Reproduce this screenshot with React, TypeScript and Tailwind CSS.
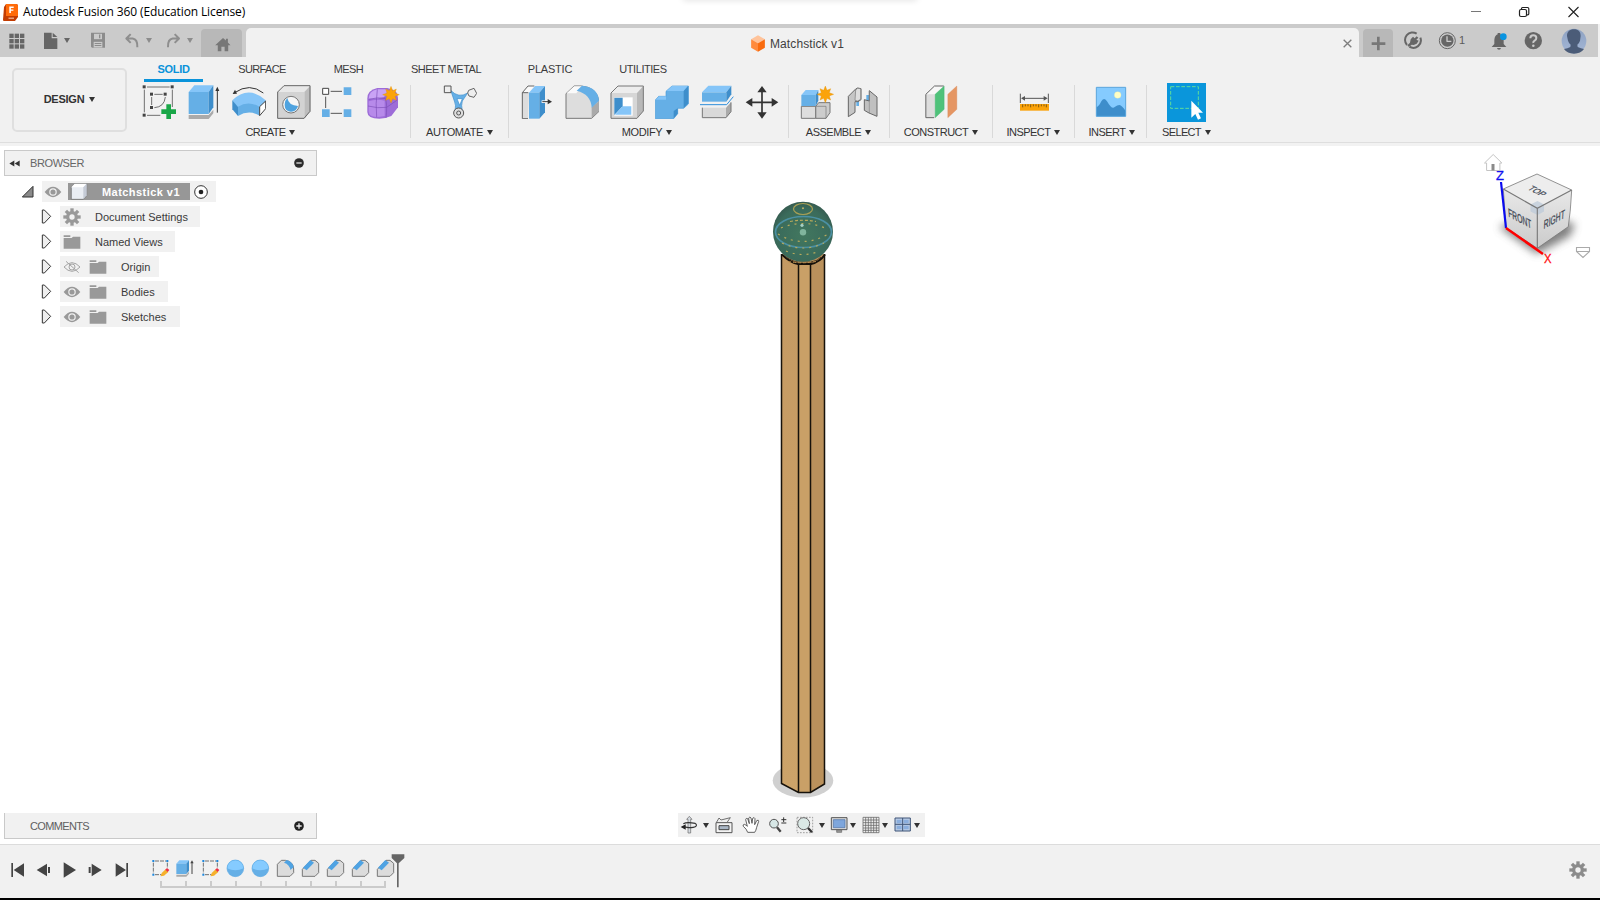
import type { ReactNode } from "react";

/* Icon artwork is laid out on sheets with three units per pixel. */
function Ic({ x, y, w = 102, h = 102, className = "w-[34px] h-[34px]", children }: { x: number; y: number; w?: number; h?: number; className?: string; children: ReactNode }) {
  return (
    <svg viewBox={`${x} ${y} ${w} ${h}`} className={`block shrink-0 ${className}`} fill="none" strokeLinejoin="round">
      {children}
    </svg>
  );
}

function Caret({ className = "text-[#333]" }: { className?: string }) {
  return (
    <svg viewBox="0 0 6 5" className={`block h-[5px] w-[6px] shrink-0 ${className}`}>
      <path d="M0 0h6L3 5z" fill="currentColor" />
    </svg>
  );
}

function Group({ label, width, track, last, iconPad = "", labelPad = "", children }: { label: string; width: string; track: string; last?: boolean; iconPad?: string; labelPad?: string; children: ReactNode }) {
  return (
    <div className={`flex h-[60px] shrink-0 ${width}`}>
      <div className="flex flex-1 flex-col items-center pt-[3px]">
        <div className={`flex h-[34px] items-center justify-center gap-[11px] ${iconPad}`}>{children}</div>
        <div className={`mt-[5px] flex h-4 items-center gap-[4px] text-[#333] ${labelPad}`}>
          <span className={`whitespace-nowrap text-[11px] leading-4 ${track}`}>{label}</span>
          <Caret />
        </div>
      </div>
      {!last && <div className="mt-[3px] h-[53px] w-px bg-[#d9d9d9]" />}
    </div>
  );
}

const Star = ({ x, y }: { x: number; y: number }) => (
  <path transform={`translate(${x} ${y})`} d="M0-25L5-12 16-17 12-5 25 0 12 5 16 17 5 12 0 25-5 12-16 17-12 5-25 0-12-5-16-17-5-12z" fill="#fba30a" stroke="#e18f00" strokeWidth="1" />
);

function TitleBar() {
  return (
    <div className="flex h-6 items-center bg-white">
      <div className="flex w-[685px] shrink-0 items-center">
        <svg viewBox="0 0 15 17" className="ml-[3px] h-[17px] w-[15px] shrink-0">
          <path d="M1 3L3 0h10q2 0 2 2v11l-3 4H1q-1 0-1-1z" fill="#c23c02" />
          <path d="M3 0h10q2 0 2 2v10H3z" fill="#ff6b0a" />
          <path d="M6.3 9V2.6h4.4v1.4H7.9v1.4h2.5v1.3H7.9V9z" fill="#fff" />
          <path d="M5.500 14.300h5.500" stroke="#e8a17c" strokeWidth="1.500" />
        </svg>
        <span className="ml-[5px] whitespace-nowrap font-['Open_Sans','Noto_Sans',sans-serif] text-[12px] leading-6 tracking-[-0.12px] text-black">Autodesk Fusion 360 (Education License)</span>
      </div>
      <div className="h-0 w-[230px] self-start shadow-[0_-2px_6px_2px_#d8d8d8]" />
      <svg viewBox="1465 0 120 24" className="ml-auto mr-[15px] h-6 w-[120px]" fill="none" stroke="#222" strokeWidth="1">
        <path d="M1471 11.500h10" stroke="#777" />
        <rect x="1519.500" y="9.500" width="7" height="7" rx="1.500" strokeWidth="1.200" />
        <path d="M1521.500 9V8.500q0-1 1-1h5q1.300 0 1.300 1.300v5q0 1-1 1h-.8" strokeWidth="1.200" />
        <path d="M1568.500 7l10 10m0-10l-10 10" strokeWidth="1.100" />
      </svg>
    </div>
  );
}

function TabBar() {
  return (
    <div className="flex h-[33px] shrink-0 border-r-2 border-[#f1f1f1] bg-[#cbcbcb]">
      <div className="flex h-[33px] w-[201px] shrink-0 items-center pl-[9px]">
        <Ic x={27} y={98} w={48} h={48} className="h-4 w-4">
          {[100, 116, 132].map((y) => [28, 44, 60].map((x) => <rect key={`${x}-${y}`} x={x} y={y} width="13" height="13" fill="#666" />))}
        </Ic>
        <Ic x={129} y={96} w={48} h={54} className="ml-[18px] h-[18px] w-4">
          <path d="M132 98h23v17h17v32h-40z" fill="#666" />
          <path d="M158 98l14 13h-14z" fill="#666" />
        </Ic>
        <Caret className="ml-[5px] text-[#666]" />
        <Ic x={270} y={98} w={48} h={50} className="ml-5 h-[17px] w-4">
          <path d="M273 100h42v45h-39l-3-3z" fill="#8c8c8c" />
          <path d="M282 103h24v16h-24z" fill="#cbcbcb" />
          <path d="M299 105v11" stroke="#8c8c8c" strokeWidth="4" />
          <path d="M281 127h26v17h-26z" fill="#cbcbcb" />
          <path d="M284 132h20M284 138h20" stroke="#8c8c8c" strokeWidth="3" />
        </Ic>
        <Ic x={372} y={98} w={48} h={50} className="ml-[18px] h-[17px] w-4">
          <path d="M392 104l-13 13 13 13M379 117h19q15 2 14 26" stroke="#8e8e8e" strokeWidth="6" />
        </Ic>
        <Caret className="ml-[6px] text-[#8c8c8c]" />
        <Ic x={495} y={98} w={48} h={50} className="ml-[13px] h-[17px] w-4">
          <path d="M524 104l13 13-13 13M537 117h-19q-15 2-14 26" stroke="#8e8e8e" strokeWidth="6" />
        </Ic>
        <Caret className="ml-[6px] text-[#8c8c8c]" />
      </div>
      <div className="mt-[5px] flex w-[41px] shrink-0 items-center justify-center rounded-t-[4px] bg-[#b8b8b8] pl-[3px] pt-[3px]">
        <Ic x={642} y={110} w={54} h={46} className="h-[15px] w-[18px]">
          <path d="M645 135l24-22 9 8v-6h6v12l8 8h-7v19h-11v-14h-10v14h-11v-19z" fill="#777" />
        </Ic>
      </div>
      <div className="ml-[4px] mt-[4px] flex w-[1113px] shrink-0 items-center rounded-t-[5px] bg-[#f1f1f1]">
        <div className="ml-[504px] flex items-center gap-[4px] pt-[2px]">
          <Ic x={242} y={106} w={48} h={52} className="h-[17px] w-4">
            <path d="M266 107l21 12-21 12-21-12z" fill="#ffc39a" />
            <path d="M245 119l21 12v26l-21-12z" fill="#ff8a3c" />
            <path d="M287 119l-21 12v26l21-12z" fill="#f96b0e" />
          </Ic>
          <span className="text-[12px] tracking-[0.1px] text-[#3f3f3f]">Matchstick v1</span>
        </div>
        <Ic x={368} y={112} w={33} h={33} className="ml-auto mr-[6px] mt-px h-[11px] w-[11px]">
          <path d="M373 117l23 23m0-23l-23 23" stroke="#7d7d7d" strokeWidth="4" />
        </Ic>
      </div>
      <div className="ml-[4px] mt-[5px] flex w-[30px] shrink-0 items-center justify-center rounded-t-[4px] bg-[#b8b8b8]">
        <Ic x={453} y={105} w={45} h={45} className="h-[15px] w-[15px]">
          <path d="M475 107v41M455 128h41" stroke="#777" strokeWidth="8" />
        </Ic>
      </div>
      <div className="flex h-[33px] items-center">
        <Ic x={552} y={94} w={57} h={57} className="ml-[11px] h-[19px] w-[19px]">
          <path d="M561 136A22.500 22.500 0 01590 102M601 114A22.500 22.500 0 01568 141" stroke="#666" strokeWidth="6" />
          <path d="M562 146l9-11" stroke="#cbcbcb" strokeWidth="4" />
          <path d="M572 119l7-8 5 5 6-6 5 4-6 6 7 3-6 9-9 4-6-1-8 7-5-5 8-8z" fill="#666" />
        </Ic>
        <Ic x={656} y={94} w={57} h={57} className="ml-[15px] h-[19px] w-[19px]">
          <circle cx="684" cy="123" r="24" stroke="#666" strokeWidth="3" />
          <circle cx="684" cy="123" r="18.500" fill="#666" />
          <path d="M683 110v15h13" stroke="#cbcbcb" strokeWidth="4" />
        </Ic>
        <span className="ml-[2px] w-[6px] text-[11px] text-[#5c5c5c]">1</span>
        <Ic x={810} y={92} w={54} h={60} className="ml-[25px] h-5 w-[18px]">
          <path d="M815 140l8-9v-12q1-14 10-17v-4h8v4q9 3 10 17v12l8 9z" fill="#666" />
          <path d="M831 143h12q-1 5-6 5t-6-5z" fill="#666" />
          <circle cx="850" cy="109" r="10" fill="#0a94e0" />
        </Ic>
        <Ic x={912} y={94} w={57} h={57} className="ml-[16px] h-[19px] w-[19px]">
          <circle cx="940" cy="123" r="26" fill="#666" />
          <path d="M931 116q0-9 9-9t9 8q0 5-5 8t-4 7" stroke="#cbcbcb" strokeWidth="6" />
          <circle cx="940" cy="138" r="3.800" fill="#cbcbcb" />
        </Ic>
        <Ic x={1023} y={84} w={78} h={78} className="ml-[18px] h-[26px] w-[26px]">
          <defs>
            <linearGradient id="av" x1="0" y1="0" x2="0" y2="1">
              <stop offset="0" stopColor="#8ea2c2" />
              <stop offset="1" stopColor="#a3b6d6" />
            </linearGradient>
          </defs>
          <circle cx="1062" cy="123" r="37" fill="url(#av)" />
          <path d="M1062 88c13 0 20 7 20 20l-2 14q-3 9-8 12l1 7q10 4 19 6-10 14-30 14t-30-14q11-2 19-6l1-7q-5-3-8-12l-3-14c0-13 8-20 21-20z" fill="#4b5c78" />
        </Ic>
      </div>
    </div>
  );
}

function Tab({ label, cls }: { label: string; cls: string }) {
  return <div className={`flex h-[25px] shrink-0 items-center justify-center whitespace-nowrap text-[11px] text-[#3c3c3c] ${cls}`}>{label}</div>;
}

function Ribbon() {
  return (
    <div className="flex h-[89px] shrink-0 bg-[#f2f2f2]">
      <div className="flex h-[86px] w-full border-b border-[#dedede] bg-[#f1f1f1]">
        <div className="ml-[12px] mt-[11px] flex h-[64px] w-[115px] shrink-0 items-center justify-center gap-[5px] rounded-[5px] border-2 border-[#dfdfdf] pb-px">
          <span className="text-[11px] font-bold tracking-[-0.25px] text-[#333]">DESIGN</span>
          <Caret />
        </div>
        <div className="ml-1 flex flex-col">
          <div className="flex pl-[13px]">
            <div className="flex h-[25px] w-[59px] flex-col items-center border-b-[3px] border-[#0a93da] text-[11px] font-bold leading-[25px] tracking-[-0.3px] text-[#0a93da]">SOLID</div>
            <Tab label="SURFACE" cls="w-[118px] tracking-[-0.65px]" />
            <Tab label="MESH" cls="w-[55px] tracking-[-0.6px]" />
            <Tab label="SHEET METAL" cls="w-[140px] tracking-[-0.48px]" />
            <Tab label="PLASTIC" cls="w-[68px] tracking-[-0.2px]" />
            <Tab label="UTILITIES" cls="w-[118px] tracking-[-0.45px]" />
          </div>
          <div className="flex">
            <Group label="CREATE" width="w-[280px]" track="tracking-[-0.65px]" iconPad="pl-[2px]">
              <Ic x={426} y={255}>
                <path d="M441 261h68M433 269v68M517 269v52M441 346h40M463 283h25M455 291v24M496 291q-3 30-33 32" stroke="#555" strokeWidth="2.500" />
                {[[433, 261], [517, 261], [433, 346], [455, 283], [496, 283], [455, 323]].map(([x, y]) => <rect key={`${x}${y}`} x={x - 5} y={y - 5} width="9" height="9" fill="#444" />)}
                <path d="M499 313h14v15h15v14h-15v15h-14v-15h-15v-14h15z" fill="#1aa748" />
              </Ic>
              <Ic x={561} y={255}>
                <path d="M566 345h60l14-16v11l-14 17h-60z" fill="#aaa" />
                <path d="M566 276l17-20h57l-14 20z" fill="#85c5f8" />
                <path d="M566 276h60v66h-60z" fill="#65afe6" />
                <path d="M626 276l14-20v66l-14 20z" fill="#3e8ecb" />
                <path d="M652 266v72" stroke="#333" strokeWidth="3" />
                <path d="M652 260l6 13h-12z" fill="#333" />
              </Ic>
              <Ic x={696} y={255}>
                <path d="M704 278q45-31 86 1" stroke="#333" strokeWidth="3" />
                <path d="M698 282l7-13 6 12z" fill="#333" />
                <path d="M697 301q48-47 100 0v10l-18 13q-32-18-66 0z" fill="#85c5f8" />
                <path d="M697 301l17 20v27l-17-20z" fill="#3e8ecb" />
                <path d="M714 320q32-20 65 1v26q-32-19-65 1z" fill="#65afe6" />
                <path d="M779 320l18-17v23l-18 21z" fill="#fff" stroke="#444" strokeWidth="3" />
              </Ic>
              <Ic x={831} y={255}>
                <path d="M832 276l20-19h79v77l-18 22h-81z" fill="#e8e8e8" />
                <path d="M913 276l18-19v77l-18 22z" fill="#bdbdbd" />
                <path d="M832 276h81v80h-81z" fill="#d3d3d3" />
                <path d="M833 276l19-19h78v77l-18 21h-79z" stroke="#666" strokeWidth="3" />
                <circle cx="873" cy="314" r="25" fill="#f6f6f6" stroke="#777" strokeWidth="3" />
                <path d="M862 294q4 23 32 24-5 18-22 17-18-2-18-21 1-14 8-20z" fill="#4fa3df" />
              </Ic>
              <Ic x={966} y={255}>
                <path d="M992 274h34M977 290v34M992 340h34" stroke="#555" strokeWidth="3" />
                <rect x="968" y="265" width="18" height="18" fill="#fff" stroke="#444" strokeWidth="3" />
                <path d="M1031 262h23v23h-23zM966 328h23v23h-23zM1031 328h23v23h-23z" fill="#65afe6" />
              </Ic>
              <Ic x={1101} y={255}>
                <path d="M1102 295q0-24 30-31h30q32 6 32 30v28l-20 26q-18 8-36 8-36 0-36-20z" fill="#9d6cd8" />
                <path d="M1106 296q0-22 26-28h28q4 12-6 22-22 8-48 6z" fill="#c9a3f5" />
                <path d="M1106 304q22-8 48-2v46q-48 10-48-14z" fill="#b78aea" />
                <path d="M1104 318q30 8 56 4l32-22M1130 352q-4-40 2-84M1158 354q4-34 0-52l-4-12M1106 298q28-8 50-2" stroke="#7d4fb8" strokeWidth="2" />
                <Star x={1173} y={284} />
              </Ic>
            </Group>
            <Group label="AUTOMATE" width="w-[98px]" track="tracking-[-0.4px]">
              <Ic x={129} y={90}>
                <path d="M152 106q24 25 51 8l-16 24q-4 12 0 31h-22q4-20-2-31z" fill="#65afe6" stroke="#3e8ecb" strokeWidth="2" />
                <path d="M171 131h16l-8 20z" fill="#fff" stroke="#3e8ecb" strokeWidth="2" />
                <rect x="133" y="93" width="20" height="20" fill="#eee" stroke="#555" strokeWidth="3" />
                <path d="M206 106l16-6 8 15-8 12-15-4-4-9z" fill="#eee" stroke="#666" strokeWidth="3" />
                <circle cx="176" cy="174" r="15" fill="#ddd" stroke="#555" strokeWidth="3" />
                <circle cx="176" cy="174" r="6" stroke="#555" strokeWidth="3" />
              </Ic>
            </Group>
            <Group label="MODIFY" width="w-[280px]" track="tracking-[-0.35px]" iconPad="pl-[2px]" labelPad="pr-[3px]">
              <Ic x={360} y={90}>
                <path d="M384 191h-17v-78l17-20h21l-18 20z" fill="#ddd" />
                <path d="M367 113l17-20h21l-18 20z" fill="#fafafa" />
                <path d="M384 191h-17v-78l17-20h19M367 113h18" stroke="#666" strokeWidth="3" />
                <path d="M387 113l18-20h30l-17 20z" fill="#85c5f8" />
                <path d="M387 113h31v78h-31z" fill="#65afe6" />
                <path d="M418 113l17-20v79l-17 19z" fill="#3e8ecb" />
                <path d="M425 140h22" stroke="#fff" strokeWidth="8" />
                <path d="M427 140h18" stroke="#333" strokeWidth="3" />
                <path d="M443 132l13 8-13 8z" fill="#333" />
              </Ic>
              <Ic x={495} y={90}>
                <path d="M498 116l24-23h22q48 4 53 47v29l-22 21h-77z" fill="#ddd" stroke="#777" strokeWidth="3" />
                <path d="M500 115l22-21h24l-17 21z" fill="#fafafa" />
                <path d="M575 157l21-18v30l-21 20z" fill="#aaa" />
                <path d="M530 107l16-15q48 4 51 45l-22 21q-2-40-45-51z" fill="#65afe6" />
              </Ic>
              <Ic x={630} y={90}>
                <path d="M632 114l22-21h76v75l-19 22h-79z" fill="#ededed" />
                <path d="M711 114l19-21v75l-19 22z" fill="#b8b8b8" />
                <path d="M632 114h79v76h-79z" fill="#d6d6d6" />
                <path d="M633 114l21-21h76v75l-19 22h-78z" stroke="#777" strokeWidth="3" />
                <path d="M643 127h55v55h-55z" fill="#fff" />
                <path d="M643 128h25v26l-25 26z" fill="#3e8ecb" />
                <path d="M668 154h26v25h-49z" fill="#85c5f8" />
              </Ic>
              <Ic x={765} y={90}>
                <path d="M766 135l10-11h22v-15l18-16h49v54l-14 13h-18v16l-12 15h-55z" fill="#65afe6" stroke="#4a9bd8" strokeWidth="2" />
                <path d="M800 108l16-15h47l-12 15z" fill="#85c5f8" />
                <path d="M767 134l10-10h21v10z" fill="#85c5f8" />
                <path d="M851 108l14-15v52l-14 14zM821 168l12-8v16l-12 14z" fill="#3e8ecb" />
              </Ic>
              <Ic x={900} y={90}>
                <path d="M906 112l19-20h69l-15 20z" fill="#85c5f8" />
                <path d="M906 112h73v28h-73z" fill="#65afe6" />
                <path d="M979 112l15-20v26l-15 22z" fill="#3e8ecb" />
                <path d="M900 149h80l20-24" stroke="#2f8fdb" strokeWidth="3" />
                <path d="M907 158h71v30h-71z" fill="#d9d9d9" />
                <path d="M978 158l15-16v28l-15 18z" fill="#aaa" />
                <path d="M907 158v30h71l15-18v-28" stroke="#777" strokeWidth="3" />
              </Ic>
              <Ic x={1033} y={90}>
                <path d="M1084 104v76M1047 142h75" stroke="#333" strokeWidth="5" />
                <path d="M1084 93l14 19h-28zM1084 191l14-19h-28zM1035 142l20-13v26zM1133 142l-20-13v26z" fill="#333" />
              </Ic>
            </Group>
            <Group label="ASSEMBLE" width="w-[101px]" track="tracking-[-0.5px]" labelPad="pr-px">
              <Ic x={30} y={90}>
                <path d="M77 154l9-11h34v30l-12 17H77z" fill="#ccc" stroke="#777" strokeWidth="3" />
                <path d="M34 154h43v36H34z" fill="#ddd" stroke="#777" strokeWidth="3" />
                <path d="M77 154h31v36" stroke="#777" strokeWidth="2" />
                <path d="M34 120l13-15h38l-8 15z" fill="#85c5f8" />
                <path d="M34 120h43v33H34z" fill="#65afe6" />
                <path d="M77 120l8-15v32l-8 16z" fill="#3e8ecb" />
                <Star x={106} y={118} />
              </Ic>
              <Ic x={165} y={90}>
                <path d="M199 118h8v35h-8zM229 120h8v24h-8z" fill="#65afe6" />
                <path d="M175 124l22-22 6-3 10 2v33l-9 6h-9v32l-20 13z" fill="#c6c6c6" stroke="#666" strokeWidth="3" />
                <path d="M197 105l6-5 9 1v32l-9 5-8-2z" fill="#dedede" stroke="#777" strokeWidth="2" />
                <path d="M238 107l23 19v58l-24-10-14-8v-32l15 4z" fill="#c0c0c0" stroke="#666" strokeWidth="3" />
                <path d="M238 108v66" stroke="#888" strokeWidth="2" />
              </Ic>
            </Group>
            <Group label="CONSTRUCT" width="w-[103px]" track="tracking-[-0.5px]">
              <Ic x={403.5} y={90}>
                <path d="M409 118l26-25h29l-27 25v70h-28z" fill="#ddd" />
                <path d="M409 118l26-25h29l-27 25z" fill="#f7f7f7" />
                <path d="M434 188h-25v-70l26-25h28" stroke="#666" strokeWidth="3" />
                <path d="M437 118l27-25v70l-27 25z" fill="#4fc27a" stroke="#3daf69" strokeWidth="1" />
                <path d="M475 118l27-25v70l-27 25z" fill="#e59663" stroke="#d88752" strokeWidth="1" />
              </Ic>
            </Group>
            <Group label="INSPECT" width="w-[82px]" track="tracking-[-0.55px]">
              <Ic x={681} y={90}>
                <path d="M691 116v28M775 116v28M698 130h70" stroke="#555" strokeWidth="3" />
                <path d="M693 130l12-7v14zM773 130l-12-7v14z" fill="#555" />
                <path d="M690 147h87v20h-87z" fill="#fba30a" />
                <path d="M698 148v9M706 148v6M714 148v6M722 148v9M730 148v6M738 148v6M746 148v9M754 148v6M762 148v6M769 148v9" stroke="#6b4a10" strokeWidth="2.500" />
              </Ic>
            </Group>
            <Group label="INSERT" width="w-[72px]" track="tracking-[-0.55px]" labelPad="pl-[3px]">
              <Ic x={912} y={90}>
                <path d="M919 97h88v87h-88z" fill="#85cbff" />
                <path d="M919 157q8-3 15-18 9-14 18 1 14 25 22 16 8-6 14-6 8 1 19 18v16h-88z" fill="#3e8ecb" />
                <circle cx="983" cy="120" r="10" fill="#ffffc5" stroke="#e3e8ae" strokeWidth="1" />
                <path d="M919 97h88v87h-88z" stroke="#5aa5dc" strokeWidth="3" />
              </Ic>
            </Group>
            <Group label="SELECT" width="w-[79px]" track="tracking-[-0.65px]" last>
              <Ic x={1131} y={83} w={117} h={117} className="h-[39px] w-[39px]">
                <path d="M1131 83h117v117h-117z" fill="#0a96db" />
                <path d="M1142 94h83v65h-83z" stroke="#5fdc9a" strokeWidth="3" strokeDasharray="11 5" />
                <path d="M1204 136v51l12-11 8 17 9-4-8-17h14z" fill="#fff" />
              </Ic>
            </Group>
          </div>
        </div>
      </div>
    </div>
  );
}

const Eye = ({ off }: { off?: boolean }) => (
  <Ic x={0} y={0} w={54} h={42} className="h-[14px] w-[18px]">
    {off ? (
      <>
        <path d="M3 21Q27-5 51 21 27 47 3 21z" stroke="#a5a5a5" strokeWidth="3" />
        <circle cx="27" cy="21" r="9" stroke="#a5a5a5" strokeWidth="3" />
        <path d="M9 4l38 34" stroke="#a5a5a5" strokeWidth="3" />
      </>
    ) : (
      <>
        <path d="M2 21Q27-10 52 21 27 52 2 21z" fill="#999" />
        <circle cx="27" cy="21" r="9.500" stroke="#f1f1f1" strokeWidth="3.500" />
      </>
    )}
  </Ic>
);

const Folder = () => (
  <Ic x={0} y={0} w={54} h={42} className="h-[14px] w-[18px]">
    <path d="M2 1h20v5H2zM2 9h24l4-4h22v36H2z" fill="#999" />
  </Ic>
);

const Gear = ({ className, color }: { className: string; color: string }) => (
  <Ic x={-27} y={-27} w={54} h={54} className={className}>
    {[0, 45, 90, 135].map((a) => <rect key={a} x="-5" y="-26" width="10" height="52" fill={color} transform={`rotate(${a})`} />)}
    <circle r="18" fill={color} />
    <circle r="8" fill="#f1f1f1" />
  </Ic>
);

function TreeRow({ label, width, children, deep }: { label: string; width: string; deep?: boolean; children: ReactNode }) {
  return (
    <div className="mb-[4px] ml-[41px] flex h-[21px] items-center">
      <Ic x={0} y={0} w={33} h={45} className="h-[15px] w-[11px]">
        <path d="M4 3h6l19 19L10 42H4z" fill="#eee" stroke="#333" strokeWidth="3" />
      </Ic>
      <div className={`ml-[8px] flex h-[21px] items-center bg-[#f1f1f1] pl-[3px] ${width}`}>
        <div className={`flex shrink-0 items-center gap-[8px] ${deep ? "w-[58px]" : "w-8"}`}>{children}</div>
        <span className="whitespace-nowrap pt-px text-[11px] text-[#3a3a3a]">{label}</span>
      </div>
    </div>
  );
}

function LeftColumn() {
  return (
    <div className="flex w-[330px] shrink-0 flex-col">
      <div className="ml-1 mt-[4px] flex h-[26px] w-[313px] shrink-0 items-center border border-[#c9c9c9] bg-[#f1f1f1]">
        <Ic x={28} y={44} w={33} h={21} className="ml-[4px] h-[7px] w-[11px]">
          <path d="M29 54.500l15-9v18zM45 54.500l15-9v18z" fill="#333" />
        </Ic>
        <span className="ml-[10px] pt-px text-[11px] tracking-[-0.4px] text-[#666]">BROWSER</span>
        <Ic x={-15} y={-15} w={30} h={30} className="ml-auto mr-[12px] h-[10px] w-[10px]">
          <circle r="14.500" fill="#2b2b2b" />
          <path d="M-8 0H8" stroke="#ddd" strokeWidth="4" />
        </Ic>
      </div>
      <div className="mb-[4px] mt-[5px] flex h-[21px] items-center pl-[21px]">
        <Ic x={63} y={120} w={39} h={39} className="h-[13px] w-[13px]">
          <path d="M67 156h32v-32z" fill="#8a8a8a" stroke="#333" strokeWidth="3" />
        </Ic>
        <div className="ml-[8px] flex h-[21px] w-[174px] items-center bg-[#f1f1f1] pl-[2px]">
          <Eye />
          <div className="ml-[6px] flex h-[17px] w-[122px] items-center bg-[#979797]">
            <Ic x={213} y={115} w={54} h={51} className="ml-[2px] h-[17px] w-[18px]">
              <path d="M217 128l10-11h36v35l-10 12h-36z" fill="#e9edf3" stroke="#666" strokeWidth="2" />
              <path d="M217 128h36l10-11h-36z" fill="#fff" />
              <path d="M253 128l10-11v35l-10 12z" fill="#c5cbd6" />
            </Ic>
            <span className="ml-[14px] whitespace-nowrap pt-px text-[11px] font-bold tracking-[0.45px] text-white">Matchstick v1</span>
          </div>
          <Ic x={-21} y={-21} w={42} h={42} className="ml-[4px] h-[14px] w-[14px]">
            <circle r="19" fill="#fff" stroke="#333" strokeWidth="3" />
            <circle r="7" fill="#222" />
          </Ic>
        </div>
      </div>
      <TreeRow label="Document Settings" width="w-[140px]"><Gear className="h-[18px] w-[18px]" color="#999" /></TreeRow>
      <TreeRow label="Named Views" width="w-[115px]"><Folder /></TreeRow>
      <TreeRow label="Origin" width="w-[99px]" deep><Eye off /><Folder /></TreeRow>
      <TreeRow label="Bodies" width="w-[108px]" deep><Eye /><Folder /></TreeRow>
      <TreeRow label="Sketches" width="w-[120px]" deep><Eye /><Folder /></TreeRow>
      <div className="mb-[5px] ml-1 mt-auto flex h-[26px] w-[313px] items-center border border-t-0 border-[#c9c9c9] bg-[#f1f1f1]">
        <span className="ml-[25px] pt-px text-[11px] tracking-[-0.65px] text-[#5f5f5f]">COMMENTS</span>
        <Ic x={-15} y={-15} w={30} h={30} className="ml-auto mr-[12px] h-[10px] w-[10px]">
          <circle r="14.500" fill="#222" />
          <path d="M-8 0H8M0-8V8" stroke="#eee" strokeWidth="4" />
        </Ic>
      </div>
    </div>
  );
}

function Model() {
  return (
    <svg viewBox="750 195 106 610" className="ml-[4px] mt-[49px] block h-[610px] w-[106px] shrink-0" fill="none">
      <defs>
        <linearGradient id="wl" x1="0" y1="0" x2="0" y2="1">
          <stop offset="0" stopColor="#c49a63" />
          <stop offset=".5" stopColor="#c99e65" />
          <stop offset="1" stopColor="#cca369" />
        </linearGradient>
        <radialGradient id="ball" cx=".5" cy=".55" r=".55">
          <stop offset="0" stopColor="#42775f" />
          <stop offset=".8" stopColor="#3a6b5b" />
          <stop offset="1" stopColor="#365b50" />
        </radialGradient>
      </defs>
      <ellipse cx="803" cy="780.500" rx="30.300" ry="17" fill="#d0d0d0" />
      <path d="M781.500 254H798.500V792.500L781.500 783.500z" fill="url(#wl)" />
      <path d="M798.500 254h12v538.500h-12z" fill="#c9a067" />
      <path d="M810.500 254h14v530l-14 8.500z" fill="#ba915c" />
      <path d="M781.500 254v529.500l17 9h12l14-8.500V254M798.500 262v530.500M810.500 262v530.500" stroke="#17120b" strokeWidth="1.500" />
      <path d="M782 254.500q8 8 16 9.500h13q9-2 14-9.500" stroke="#17120b" strokeWidth="2" />
      <path d="M786 257q8 5 12 5h13q7-1 10-5" stroke="#4a3820" strokeWidth="1" />
      <circle cx="803" cy="231.800" r="30" fill="url(#ball)" />
      <path d="M788 261.500q14 2.500 28 0" stroke="#b98e4e" strokeWidth="1" strokeDasharray="3 2" />
      <ellipse cx="803" cy="209" rx="9.500" ry="5.500" stroke="#a9a055" strokeWidth="1.200" />
      <circle cx="803" cy="208.300" r="1" fill="#c2b066" />
      <ellipse cx="803.500" cy="232" rx="28" ry="15.500" stroke="#4b90a3" strokeWidth="1.700" />
      <path d="M790 221.500q13-2.500 26 0" stroke="#b8aa5c" strokeWidth="1.200" strokeDasharray="3 2" />
      <path d="M781 228q22-9 44 0M778 234q25 15 50 0M782 243q21 10 42 0M786 251q17 7 34 0" stroke="#b8aa5c" strokeWidth="1.200" strokeDasharray="2 5" />
      <circle cx="802" cy="225.300" r="1.600" fill="#a6cfc6" />
      <circle cx="803" cy="232.200" r="3.200" fill="#80b49d" />
    </svg>
  );
}

function NavBar() {
  const s = "h-[20px] w-[18px]";
  return (
    <div className="ml-px mt-[8px] flex h-[24px] w-[247px] shrink-0 items-center bg-[#f1f1f1] pl-[2px]">
      <Ic x={28} y={30} w={54} h={60} className={s}>
        <path d="M56 34l8 9h-4v41h-8V43h-4z" fill="#d5dae0" stroke="#666" strokeWidth="2" />
        <path d="M74 55q12 12-20 13l-18-3M38 56q10-6 36-1" stroke="#333" strokeWidth="3.500" />
        <path d="M30 66l15-8v16z" fill="#222" />
      </Ic>
      <Caret className="ml-[5px] text-[#333]" />
      <Ic x={132} y={30} w={54} h={60} className={`${s} ml-[6px]`}>
        <path d="M135 53h48v30h-48z" fill="#f3f3f3" stroke="#555" strokeWidth="3" />
        <path d="M137 51l7-12 6 6 28-7-9 13" fill="#eee" stroke="#555" strokeWidth="2.500" />
        <path d="M144 62h30v12h-30z" fill="#a9b6c5" stroke="#444" strokeWidth="3" />
      </Ic>
      <Ic x={214} y={30} w={54} h={60} className={`${s} ml-[9px]`}>
        <path d="M231 82q-3-10-13-18-3-5 3-6 6 2 9 6l-5-20q1-6 6-3l5 15-2-17q4-6 7 0l3 16 2-15q5-5 7 1l-1 18 6-12q6-4 6 2l-6 18q-2 10-6 15z" fill="#fff" stroke="#444" strokeWidth="2.500" />
      </Ic>
      <Ic x={294} y={30} w={54} h={60} className={`${s} ml-[9px]`}>
        <circle cx="309" cy="56" r="13" fill="#d7e7e6" stroke="#555" strokeWidth="3" />
        <path d="M318 67l11 13" stroke="#444" strokeWidth="7" />
        <path d="M338 37v14M331 44h15M331 54h15" stroke="#333" strokeWidth="3" />
      </Ic>
      <Ic x={376} y={30} w={54} h={60} className={`${s} ml-[9px]`}>
        <path d="M379 37h47v46h-47z" stroke="#777" strokeWidth="2" strokeDasharray="5 4" />
        <circle cx="399" cy="56" r="18" fill="#dbe9e6" stroke="#666" strokeWidth="3" />
        <path d="M412 69l12 13" stroke="#333" strokeWidth="7" />
      </Ic>
      <Caret className="ml-[5px] text-[#333]" />
      <Ic x={478} y={30} w={54} h={60} className={`${s} ml-[5px]`}>
        <path d="M482 38h47v36h-47z" fill="#dcdcdc" stroke="#555" strokeWidth="3" />
        <path d="M488 44h35v24h-35z" fill="#7ea6dc" stroke="#4c6fa5" strokeWidth="2" />
        <path d="M498 75h15v7h-15z" fill="#999" stroke="#666" strokeWidth="2" />
      </Ic>
      <Caret className="ml-[2px] text-[#333]" />
      <Ic x={575} y={30} w={54} h={60} className={`${s} ml-[6px]`}>
        <path d="M578 37h48v46h-48zM586 37v46M594 37v46M602 37v46M610 37v46M618 37v46M578 45h48M578 53h48M578 61h48M578 69h48M578 76h48" stroke="#666" strokeWidth="2.300" />
      </Ic>
      <Caret className="ml-[2px] text-[#333]" />
      <Ic x={672} y={30} w={54} h={60} className={`${s} ml-[6px]`}>
        <path d="M675 39h46v39h-46z" fill="#bccde4" stroke="#3e5578" strokeWidth="3" />
        <path d="M680 44h15v11h-15zM701 44h15v11h-15zM680 62h15v11h-15zM701 62h15v11h-15z" fill="#8aaede" />
        <path d="M698 39v39M675 58h46" stroke="#3e5578" strokeWidth="3" />
      </Ic>
      <Caret className="ml-[2px] text-[#333]" />
    </div>
  );
}

function ViewCube() {
  const t = "font-['Liberation_Sans',Arial,sans-serif]";
  return (
    <svg viewBox="1460 146 140 125" className="block h-[125px] w-[140px] shrink-0" fill="none">
      <defs>
        <filter id="soft" x="-30%" y="-60%" width="160%" height="220%"><feGaussianBlur stdDeviation="4" /></filter>
        <linearGradient id="cf" x1="0" y1="0" x2="0" y2="1"><stop offset="0" stopColor="#e8e8e8" /><stop offset="1" stopColor="#cbcbcb" /></linearGradient>
      </defs>
      <path d="M1499 227l34-14 42 11-5 12-33 18z" fill="#555" opacity=".75" filter="url(#soft)" />
      <path d="M1537 174l34.700 16-34.400 18.300-34-19.300z" fill="#ededed" />
      <path d="M1503.300 189l34 19.300v40l-31.300-20.600z" fill="url(#cf)" />
      <path d="M1571.700 190l-34.400 18.300v40l31-21.600z" fill="url(#cf)" />
      <path d="M1530.500 204.500l7-3.500 6.500 3.500v7l-6.500 3.500-7-3.500z" fill="#bccad8" opacity=".75" />
      <path d="M1503.300 189l33.700-15 34.700 16-1.400 20-2 16.700-31 21.600-31.300-20.600z" stroke="#777" strokeWidth=".8" />
      <path d="M1503.300 189l34 19.300 34.400-18.300M1537.300 208.300v40" stroke="#777" strokeWidth="1.100" />
      <text transform="matrix(.86 .45 .08 1 1508.500 216.500)" fontSize="12" fill="#3f4854" stroke="#3f4854" strokeWidth=".3" className={t} textLength="27" lengthAdjust="spacingAndGlyphs">FRONT</text>
      <text transform="matrix(.88 -.47 -.05 1 1543.500 229)" fontSize="12" fill="#3f4854" stroke="#3f4854" strokeWidth=".3" className={t} textLength="24" lengthAdjust="spacingAndGlyphs">RIGHT</text>
      <text transform="matrix(.88 .46 -.75 .45 1527 189)" fontSize="11" fill="#3f4854" stroke="#3f4854" strokeWidth=".3" className={t} textLength="17" lengthAdjust="spacingAndGlyphs">TOP</text>
      <path d="M1506 228l-5-46" stroke="#0a0af0" strokeWidth="2.200" />
      <path d="M1506 228l37 26" stroke="#f00" strokeWidth="2.500" />
      <text x="1496" y="180" fontSize="13" fill="#1212f0" stroke="#1212f0" strokeWidth=".3" className={t}>Z</text>
      <text x="1544" y="263" fontSize="13" fill="#f11" stroke="#f11" strokeWidth=".3" className={t} textLength="7.500" lengthAdjust="spacingAndGlyphs">X</text>
      <path d="M1484.500 163l8.700-8.500 8.700 8.500h-2v7.500h-13.300v-7.500z" fill="#fff" stroke="#c4c4c4" strokeWidth="1" />
      <path d="M1491.500 164h3v6.500h-3z" fill="#8a8a8a" />
      <path d="M1576.500 247.500h13v4l-6.500 6-6.500-6zM1576.500 251.500h13" fill="#fff" stroke="#aaa" strokeWidth="1.100" />
    </svg>
  );
}

type Feature = "sketch" | "extrude" | "sphere" | "fillet" | "chamfer";
const features: Feature[] = ["sketch", "extrude", "sketch", "sphere", "sphere", "fillet", "chamfer", "chamfer", "chamfer", "chamfer"];

function FeatureIcon({ kind }: { kind: Feature }) {
  return (
    <Ic x={0} y={0} w={60} h={60} className="h-5 w-5">
      {kind === "sketch" && (
        <>
          <path d="M12 9h34M7 14v32M49 14v16M12 50h20" stroke="#555" strokeWidth="2.500" strokeDasharray="12 3" />
          <path d="M4 6h6v6H4zM46 6h6v6h-6zM4 47h6v6H4z" fill="#1c87dd" />
          <path d="M29 55l3-10 12-11 8 8-13 11z" fill="#f5b12d" />
          <path d="M43 35l5-5 7 6-5 6z" fill="#ee3048" />
        </>
      )}
      {kind === "extrude" && (
        <>
          <path d="M1 50h30l8-9v6l-8 9H1z" fill="#aaa" />
          <path d="M1 17l9-10h29l-8 10z" fill="#85c5f8" />
          <path d="M1 17h30v31H1z" fill="#65afe6" />
          <path d="M31 17l8-10v31l-8 10z" fill="#3e8ecb" />
          <path d="M48 12v36" stroke="#444" strokeWidth="3" />
          <path d="M48 7l5 9H43z" fill="#444" />
        </>
      )}
      {kind === "sphere" && (
        <>
          <circle cx="28" cy="31" r="25" fill="#65afe6" />
          <path d="M3 31a25 25 0 0150 0q-25 12-50 0z" fill="#85cbff" />
          <circle cx="28" cy="31" r="25" stroke="#5ba9e4" strokeWidth="2" />
        </>
      )}
      {kind === "fillet" && (
        <>
          <path d="M4 19L16 7h12q24 3 25 26v11L42 55H4z" fill="#dcdcdc" stroke="#777" strokeWidth="3" />
          <path d="M24 14l8-8q18 5 21 22l-10 8q-2-17-19-22z" fill="#4fa3e3" />
        </>
      )}
      {kind === "chamfer" && (
        <>
          <path d="M4 34L30 7h12l11 9v28L42 55H4z" fill="#dcdcdc" stroke="#777" strokeWidth="3" />
          <path d="M6 29L28 6l11 8-22 23z" fill="#4fa3e3" />
        </>
      )}
    </Ic>
  );
}

function Timeline() {
  const c = "h-[18px] w-[18px]";
  return (
    <div className="flex h-[54px] shrink-0 border-t border-[#dcdcdc] bg-[#f1f1f1] pl-[9px]">
      <div className="mt-[-3px] flex items-center gap-[8px]">
        <Ic x={27} y={167} w={54} h={54} className={c}><path d="M34 173h5v42h-5zM72 174v40l-31-20z" fill="#444" /></Ic>
        <Ic x={105} y={167} w={54} h={54} className={c}><path d="M110 194l31-19v38zM144 185h6v18h-6z" fill="#444" /></Ic>
        <Ic x={183} y={167} w={54} h={54} className={c}><path d="M191 171l37 23-37 23z" fill="#444" /></Ic>
        <Ic x={261} y={167} w={54} h={54} className={c}><path d="M305 194l-30-19v38zM266 185h6v18h-6z" fill="#444" /></Ic>
        <Ic x={339} y={167} w={54} h={54} className={c}><path d="M347 174v40l31-20zM379 173h5v42h-5z" fill="#444" /></Ic>
      </div>
      <div className="ml-[20px] flex flex-col pt-[13px]">
        <div className="flex gap-[5px]">
          {features.map((f, i) => <FeatureIcon key={i} kind={f} />)}
        </div>
        <div className="ml-[9px] mt-[3px] flex">
          {features.slice(1).map((_, i) => <div key={i} className="h-[7px] w-[25px] border-b-2 border-l-2 border-[#cbcbcb] last:w-[26px] last:border-r-2" />)}
        </div>
      </div>
      <Ic x={1173} y={147} w={42} h={102} className="-ml-[5px] mt-[9px] h-[34px] w-[14px]">
        <path d="M1175 148h38v11l-17 16v72h-5v-72l-16-16z" fill="#666" />
      </Ic>
      <Gear className="ml-auto mr-[13px] mt-[16px] h-[18px] w-[18px]" color="#8b8b8b" />
    </div>
  );
}

export default function App() {
  return (
    <div className="flex h-[900px] w-[1600px] flex-col overflow-hidden bg-white font-['Liberation_Sans',Arial,sans-serif]">
      <TitleBar />
      <TabBar />
      <Ribbon />
      <div className="flex min-h-0 flex-1">
        <LeftColumn />
        <div className="flex w-[941px] shrink-0 flex-col items-center">
          <Model />
          <NavBar />
        </div>
        <div className="ml-auto w-[140px]">
          <ViewCube />
        </div>
      </div>
      <Timeline />
      <div className="h-[2px] shrink-0 bg-black" />
    </div>
  );
}
